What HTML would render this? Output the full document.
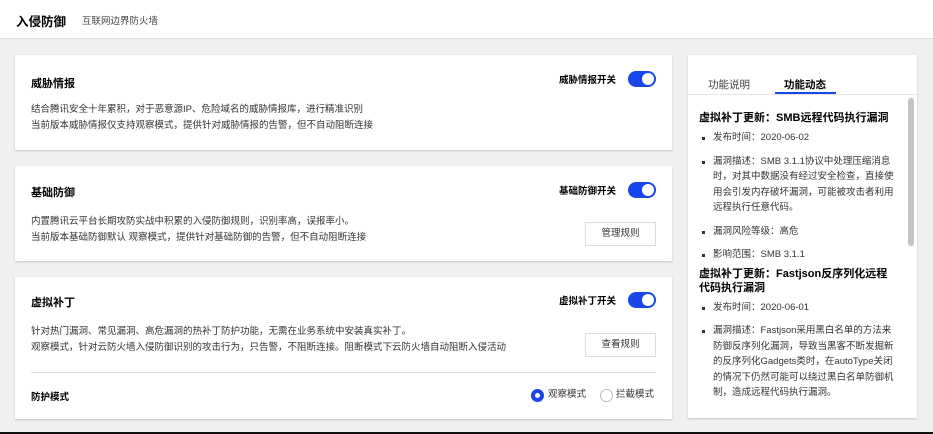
<!DOCTYPE html>
<html><head><meta charset="utf-8"><style>
*{margin:0;padding:0;box-sizing:border-box}
body{width:933px;height:434px;background:#f0f0f0;font-family:"Liberation Sans","Noto Sans CJK SC",sans-serif;color:#222;position:relative;overflow:hidden}
.hdr{position:absolute;left:0;top:0;width:933px;height:39px;background:#fff;border-bottom:1px solid #ddd}
.hdr .t{position:absolute;left:16px;top:11px;font-size:12.5px;font-weight:bold;color:#000}
.hdr .s{position:absolute;left:82px;top:13px;font-size:9.5px;color:#444}
.card{position:absolute;left:15px;width:657px;background:#fff;box-shadow:0 1px 2px rgba(0,0,0,.18)}
.ab{position:absolute;white-space:nowrap}
.ti{font-size:11px;font-weight:bold;color:#000}
.tx{font-size:9.5px;color:#333;line-height:16px}
.sw{font-size:9.5px;font-weight:bold;color:#000}
.tg{position:absolute;width:28px;height:16px;border-radius:8px;background:#1846e8}
.tg:after{content:"";position:absolute;right:2px;top:2px;width:12px;height:12px;border-radius:50%;background:#fff}
.btn{position:absolute;width:71px;height:24px;border:1px solid #ddd;font-size:9.5px;color:#333;text-align:center;line-height:22px}
.rp{position:absolute;left:688px;top:55px;width:229px;height:363px;background:#fff;box-shadow:0 1px 2px rgba(0,0,0,.18);overflow:hidden}
.rp h4{font-size:11px;font-weight:bold;color:#000;line-height:14px;margin:0 0 5px}
.rp ul{list-style:none;margin:0 0 2px}
.rp li{position:relative;padding-left:14px;font-size:9.5px;color:#333;line-height:15.5px;margin-bottom:8px}
.rp li:before{content:"";position:absolute;left:3px;top:7px;width:3px;height:3px;background:#333}
</style></head><body>
<div class="hdr"><div class="t">入侵防御</div><div class="s">互联网边界防火墙</div></div>

<div class="card" style="top:55px;height:95px">
<div class="ab ti" style="left:16px;top:20px">威胁情报</div>
<div class="ab sw" style="left:544px;top:17px">威胁情报开关</div>
<div class="tg" style="left:613px;top:16px"></div>
<div class="ab tx" style="left:16px;top:47px">结合腾讯安全十年累积，对于恶意源IP、危险域名的威胁情报库，进行精准识别<br>当前版本威胁情报仅支持观察模式，提供针对威胁情报的告警，但不自动阻断连接</div>
</div>

<div class="card" style="top:166px;height:95px">
<div class="ab ti" style="left:16px;top:18px">基础防御</div>
<div class="ab sw" style="left:544px;top:17px">基础防御开关</div>
<div class="tg" style="left:613px;top:16px"></div>
<div class="ab tx" style="left:16px;top:48px">内置腾讯云平台长期攻防实战中积累的入侵防御规则，识别率高，误报率小。<br>当前版本基础防御默认 观察模式，提供针对基础防御的告警，但不自动阻断连接</div>
<div class="btn" style="left:570px;top:56px">管理规则</div>
</div>

<div class="card" style="top:277px;height:142px">
<div class="ab ti" style="left:16px;top:17px">虚拟补丁</div>
<div class="ab sw" style="left:544px;top:16px">虚拟补丁开关</div>
<div class="tg" style="left:613px;top:15px"></div>
<div class="ab tx" style="left:16px;top:47px">针对热门漏洞、常见漏洞、高危漏洞的热补丁防护功能，无需在业务系统中安装真实补丁。<br>观察模式，针对云防火墙入侵防御识别的攻击行为，只告警，不阻断连接。阻断模式下云防火墙自动阻断入侵活动</div>
<div class="btn" style="left:570px;top:56px">查看规则</div>
<div class="ab" style="left:16px;top:95px;width:625px;border-top:1px solid #ddd"></div>
<div class="ab sw" style="left:16px;top:112px">防护模式</div>
<div class="ab" style="left:516px;top:112px;width:13px;height:13px;border-radius:50%;border:4px solid #1846e8"></div>
<div class="ab tx" style="left:533px;top:110px;color:#333">观察模式</div>
<div class="ab" style="left:585px;top:112px;width:13px;height:13px;border-radius:50%;border:1px solid #bbb"></div>
<div class="ab tx" style="left:601px;top:110px;color:#333">拦截模式</div>
</div>

<div class="rp">
<div class="ab" style="left:20px;top:22px;font-size:10.5px;color:#444">功能说明</div>
<div class="ab" style="left:96px;top:22px;font-size:10.5px;font-weight:bold;color:#000">功能动态</div>
<div class="ab" style="left:87px;top:37px;width:61px;height:2px;background:#1846e8"></div>
<div class="ab" style="left:0;top:39px;width:229px;border-top:1px solid #e5e5e5"></div>
<div class="ab" style="left:220px;top:43px;width:6px;height:148px;border-radius:3px;background:#c4c4c4"></div>
<div class="ab" style="left:11px;top:56px;width:196px;white-space:normal">
<h4>虚拟补丁更新：SMB远程代码执行漏洞</h4>
<ul>
<li>发布时间：2020-06-02</li>
<li>漏洞描述：SMB 3.1.1协议中处理压缩消息时，对其中数据没有经过安全检查，直接使用会引发内存破坏漏洞，可能被攻击者利用远程执行任意代码。</li>
<li>漏洞风险等级：高危</li>
<li style="margin-bottom:4px">影响范围：SMB 3.1.1</li>
</ul>
<h4>虚拟补丁更新：Fastjson反序列化远程<br>代码执行漏洞</h4>
<ul>
<li>发布时间：2020-06-01</li>
<li>漏洞描述：Fastjson采用黑白名单的方法来防御反序列化漏洞，导致当黑客不断发掘新的反序列化Gadgets类时，在autoType关闭的情况下仍然可能可以绕过黑白名单防御机制，造成远程代码执行漏洞。</li>
</ul>
</div>
<div class="ab" style="left:0;top:352px;width:220px;height:11px;background:#fff"></div>
</div>

<div class="ab" style="left:0;top:432px;width:933px;height:2px;background:#111"></div>
</body></html>
